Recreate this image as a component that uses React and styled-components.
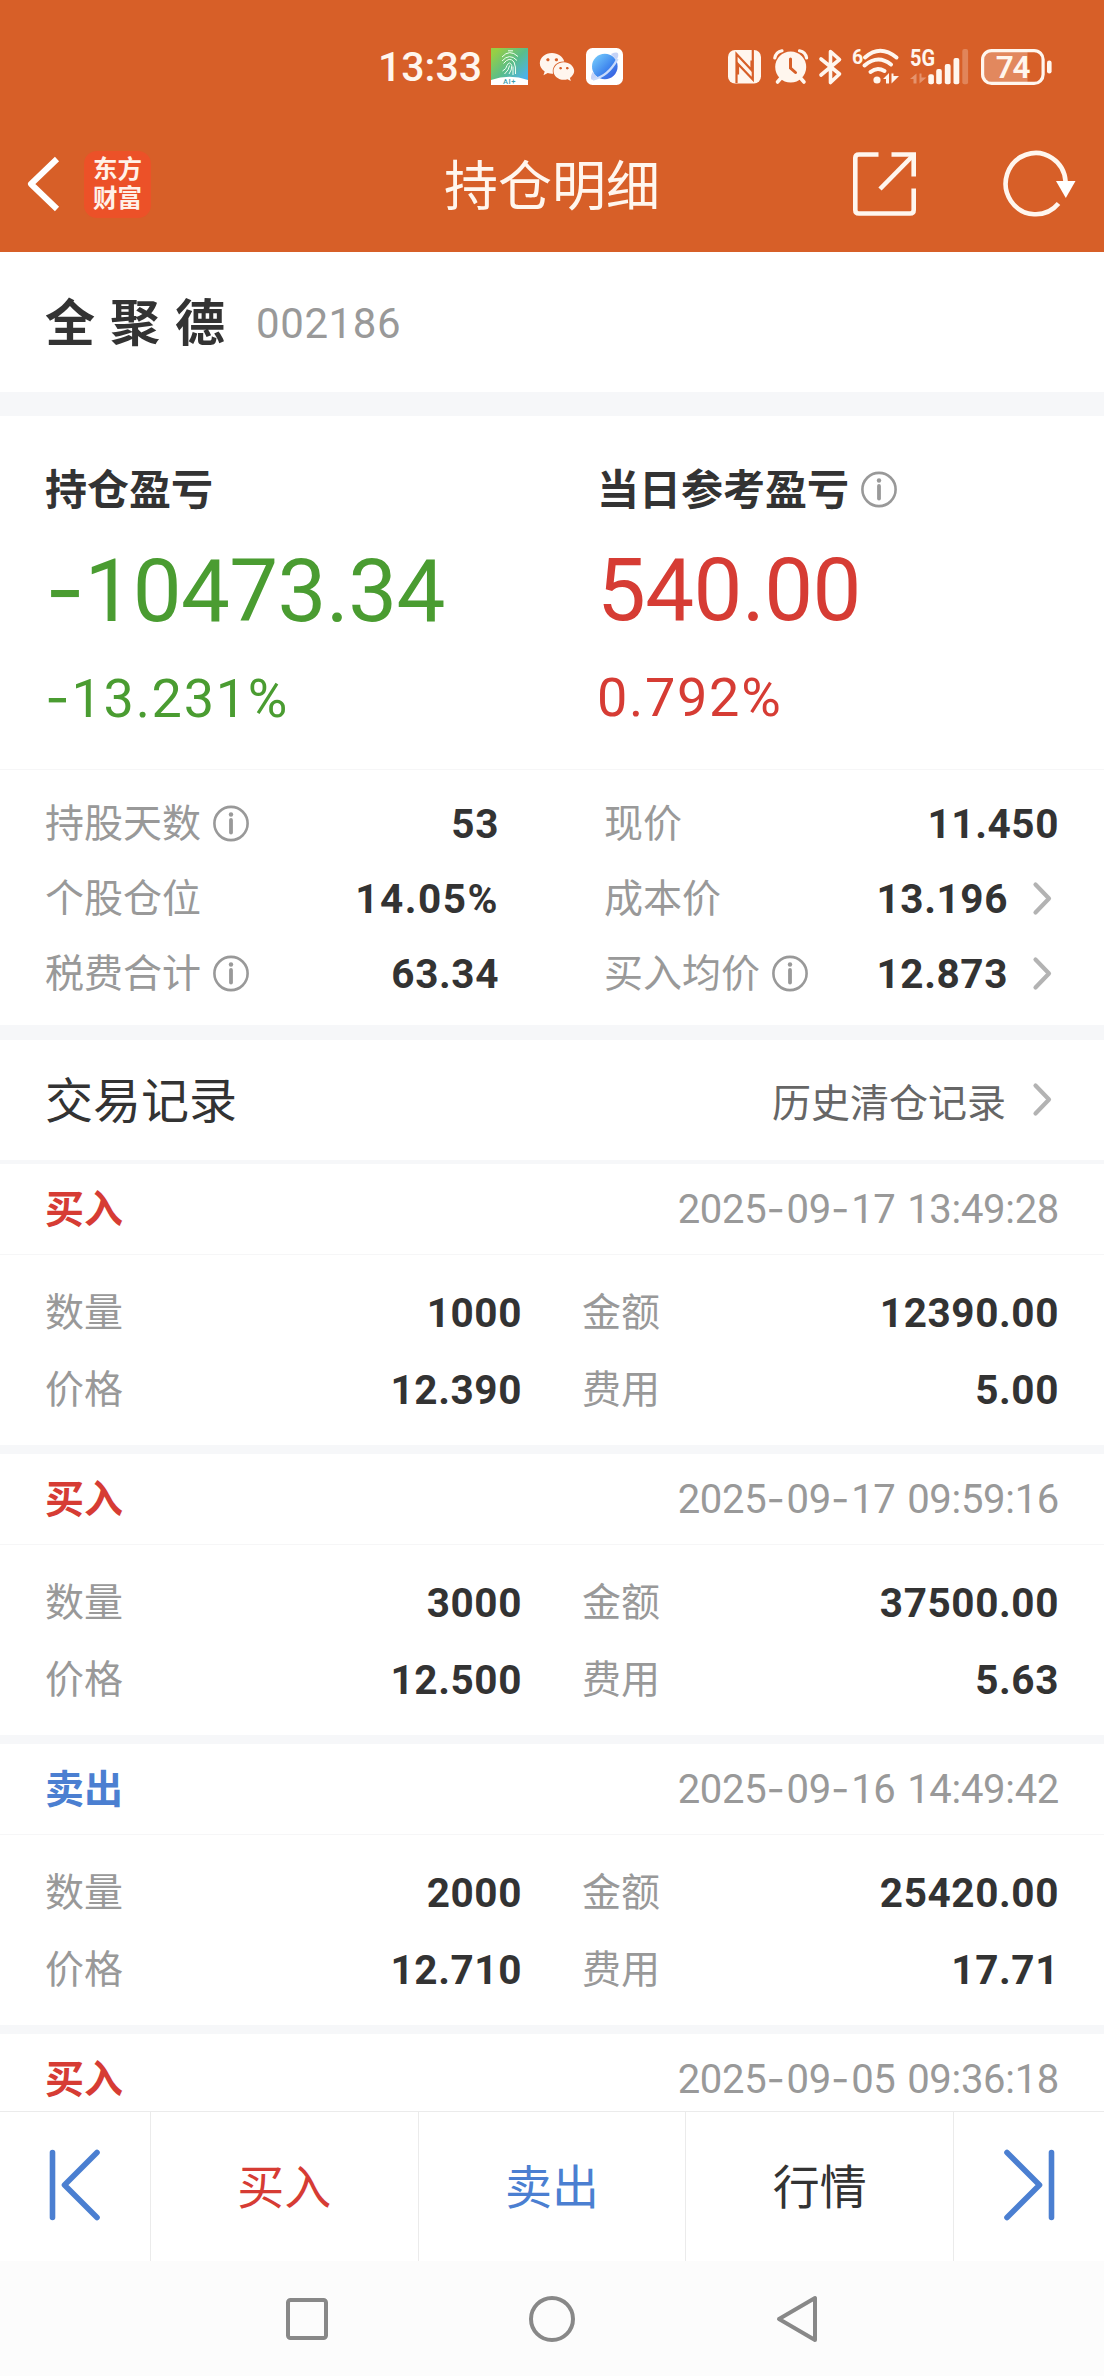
import { Fragment } from 'react'
import styled, { createGlobalStyle } from 'styled-components'
import { FaWeixin } from 'react-icons/fa'

const COLOR = {
  brand: '#d75f28',
  onBrand: '#fff6ee',
  text: '#333333',
  textMid: '#666666',
  textLight: '#999999',
  chevron: '#b3b3b3',
  up: '#d63c34',
  down: '#4a9c31',
  sell: '#4b7fd1',
  gap: '#f6f7f9',
  line: '#f6f6f7',
  barLine: '#ebebeb',
}

const GlobalStyle = createGlobalStyle`
  * {
    box-sizing: border-box;
  }

  body {
    margin: 0;
    background: #fff;
    font-family: 'Roboto', 'Noto Sans CJK SC', sans-serif;
    color: ${COLOR.text};
  }

  svg {
    display: block;
    flex: none;
    overflow: visible;
  }
`

const Screen = styled.div`
  display: flex;
  flex-direction: column;
  width: 1104px;
  height: 2376px;
  overflow: hidden;
`

const Header = styled.header`
  flex: none;
  height: 252px;
  background: ${COLOR.brand};
  color: ${COLOR.onBrand};
`

const StatusBar = styled.div`
  display: flex;
  align-items: center;
  justify-content: space-between;
  height: 116px;
  padding: 17px 52px 0 378px;
`

const StatusGroup = styled.div`
  display: flex;
  align-items: center;
  gap: ${({ $gap }) => $gap}px;
`

const Clock = styled.span`
  width: 102px;
  font-size: 41px;
  font-weight: 500;
  line-height: 48px;
  white-space: nowrap;
`

const TitleBar = styled.div`
  display: grid;
  grid-template-columns: 1fr auto 1fr;
  align-items: center;
  height: 136px;
  padding: 0 28px 0 27px;
`

const TitleBarSide = styled.div`
  display: flex;
  align-items: center;
  justify-content: ${({ $end }) => ($end ? 'flex-end' : 'flex-start')};
  gap: ${({ $end }) => ($end ? 88 : 24)}px;
`

const Title = styled.h1`
  margin: 0;
  padding: 7px 0 0 1px;
  font-size: 54px;
  font-weight: 400;
  line-height: 60px;
`

const AppLogo = styled.div`
  display: flex;
  flex-direction: column;
  align-items: center;
  justify-content: center;
  width: 67px;
  height: 67px;
  border-radius: 13px;
  background: #ec5128;
  font-size: 24.5px;
  font-weight: 600;
  line-height: 29px;
  color: #fff1e8;
`

const StockRow = styled.section`
  display: flex;
  flex: none;
  align-items: center;
  gap: 16px;
  height: 140px;
  padding: 3px 45px 0;
`

const StockName = styled.span`
  font-size: 50px;
  font-weight: 700;
  line-height: 60px;
  letter-spacing: 15px;
`

const StockCode = styled.span`
  font-size: 42px;
  line-height: 60px;
  letter-spacing: 0.6px;
  color: ${COLOR.textLight};
`

const Gap = styled.div`
  flex: none;
  height: ${({ $size }) => $size}px;
  background: ${COLOR.gap};
`

const Summary = styled.section`
  display: grid;
  flex: none;
  grid-template-columns: 1fr 1fr;
  height: 354px;
  border-bottom: 1px solid ${COLOR.line};
`

const SummaryColumn = styled.div`
  padding: 46px 0 0 45px;
  color: ${({ $color }) => $color};
`

const SummaryLabel = styled.div`
  display: flex;
  align-items: center;
  gap: 12px;
  height: 56px;
  font-size: 42px;
  font-weight: 700;
  line-height: 54px;
  color: ${COLOR.text};

  span {
    padding-top: 2px;
  }
`

const SummaryAmount = styled.div`
  height: 104px;
  margin-top: 20px;
  font-size: 87px;
  line-height: 104px;
  letter-spacing: -0.6px;
`

const SummaryPercent = styled.div`
  height: 64px;
  margin-top: 24px;
  font-size: 54px;
  line-height: 64px;
  letter-spacing: 1.7px;
`

const Dash = styled.span`
  font-family: 'Inter', sans-serif;
`

const DetailGrid = styled.section`
  display: grid;
  flex: none;
  grid-template-columns: 454px 455px;
  grid-auto-rows: 75px;
  column-gap: 105px;
  height: 255px;
  padding: 16px 45px 0;
`

const RecordGrid = styled(DetailGrid)`
  grid-template-columns: 477px 477px;
  grid-auto-rows: 77px;
  column-gap: 60px;
  height: 190px;
  padding-top: 19px;
`

const Field = styled.div`
  display: flex;
  align-items: center;
`

const FieldLabel = styled.span`
  display: flex;
  align-items: center;
  gap: 12px;
  margin-right: auto;
  font-size: 39px;
  line-height: 50px;
  color: ${COLOR.textLight};
`

const FieldValue = styled.span`
  font-size: 40.5px;
  font-weight: 700;
  line-height: 50px;
  letter-spacing: ${({ $wide }) => ($wide ? 1.5 : 0.6)}px;
`

const ChevronBox = styled.span`
  display: flex;
  justify-content: flex-end;
  width: 51px;
  padding-right: 7px;
`

const SectionHeader = styled.section`
  display: flex;
  flex: none;
  align-items: center;
  height: 120px;
  padding: 0 45px;
`

const SectionTitle = styled.h2`
  margin: 0 auto 0 0;
  padding-top: 3px;
  font-size: 48px;
  font-weight: 400;
  line-height: 60px;
`

const SectionLink = styled.span`
  padding: 8px 2px 0 0;
  font-size: 39px;
  line-height: 50px;
  color: ${COLOR.textMid};
`

const Records = styled.main`
  flex: 1;
  min-height: 0;
  overflow: hidden;
`

const RecordHeader = styled.div`
  display: flex;
  align-items: center;
  justify-content: space-between;
  height: 91px;
  padding: 0 45px;
  border-bottom: 1px solid ${COLOR.line};
`

const RecordSide = styled.span`
  padding-top: 2px;
  font-size: 39px;
  font-weight: 700;
  line-height: 50px;
  color: ${({ $sell }) => ($sell ? COLOR.sell : COLOR.up)};
`

const RecordTime = styled.time`
  font-size: 40px;
  line-height: 50px;
  letter-spacing: -0.3px;
  word-spacing: 2px;
  color: ${COLOR.textLight};

  ${Dash} {
    letter-spacing: 1.8px;
  }
`

const ActionBar = styled.nav`
  display: grid;
  flex: none;
  grid-template-columns: 151px 1fr 1fr 1fr 150px;
  height: 150px;
  border-top: 1px solid ${COLOR.barLine};
`

const Action = styled.button`
  display: flex;
  align-items: center;
  justify-content: center;
  padding: ${({ $icon }) => ($icon ? '0 0 3px' : '2px 0 0')};
  border: 0;
  border-right: 1px solid ${COLOR.barLine};
  background: none;
  font: inherit;
  font-size: 47px;
  line-height: 60px;
  color: ${({ $color }) => $color || COLOR.sell};

  &:last-child {
    border-right: 0;
  }
`

const SystemBar = styled.footer`
  display: grid;
  flex: none;
  grid-template-columns: repeat(3, 245px);
  align-items: center;
  justify-content: center;
  justify-items: center;
  height: 115px;
  background: #fcfcfc;
`

const InfoIcon = () => (
  <svg width="36" height="36" viewBox="0 0 36 36" fill="none" stroke="#999" strokeWidth="2.6">
    <circle cx="18" cy="17.5" r="16.6" />
    <path d="M18 14V26.5" strokeWidth="3.8" strokeLinecap="round" />
    <circle cx="18" cy="8.5" r="2.2" fill="#999" stroke="none" />
  </svg>
)

const Chevron = () => (
  <svg width="20" height="34" viewBox="0 0 20 34" fill="none" stroke={COLOR.chevron} strokeWidth="4.2" strokeLinecap="round" strokeLinejoin="round">
    <path d="M3.5 2.5L17 16.5L3.5 30.5" />
  </svg>
)

const BackIcon = () => (
  <svg width="33" height="56" viewBox="0 0 33 56" fill="none" stroke="#fff" strokeWidth="6" strokeLinejoin="round">
    <path d="M30 3L4 28L30 53" />
  </svg>
)

const ShareIcon = () => (
  <svg width="63" height="64" viewBox="0 0 63 64" fill="none" stroke={COLOR.onBrand} strokeWidth="4.6">
    <path d="M25.5 2.5H6Q2.3 2.5 2.3 6V58Q2.3 61.5 6 61.5H57Q60.7 61.5 60.7 58V36.5" />
    <path d="M38.5 2.5H60.7V24.5" />
    <path d="M27 37L60 3.5" />
  </svg>
)

const RefreshIcon = () => (
  <svg width="72" height="66" viewBox="0 0 72 66" fill="none" stroke={COLOR.onBrand} strokeWidth="4.6">
    <path d="M54.5 52.5A30 30.6 0 1 1 61.6 30.5" />
    <path d="M52 30H71.5L61.8 47Z" fill="#fff" stroke="none" />
  </svg>
)

const ScanAppIcon = () => (
  <svg width="37" height="37" viewBox="0 0 37 37">
    <defs>
      <linearGradient id="scanBg" x1="0" y1="0" x2="1" y2="1">
        <stop offset="0.1" stopColor="#97cf45" />
        <stop offset="0.5" stopColor="#59bd8b" />
        <stop offset="0.85" stopColor="#4db2ea" />
      </linearGradient>
    </defs>
    <rect width="37" height="37" fill="url(#scanBg)" />
    <g fill="none" stroke="#f0fff0" strokeWidth="1">
      <path d="M17 2.8H22" />
      <path d="M11 9Q18.5 0.5 27 8.5" />
      <path d="M11 13Q18.5 4.5 26 12.5" />
      <path d="M12.5 15.5Q18.5 8 23 14Q25 18 24.5 26" />
      <path d="M11.5 23Q15.5 21 16 17.5Q18.5 12.5 20.8 17.5Q21 22 18 26" />
      <path d="M13.5 26Q18 22 18.6 17.5" />
      <path d="M22 18.5V27" />
    </g>
    <path d="M0 32Q18.5 25.5 37 32V37H0Z" fill="#fff" />
    <text x="18.5" y="36" textAnchor="middle" fontSize="7.5" fontWeight="500" letterSpacing="0.6" fill="#3f9fae">AI+</text>
  </svg>
)

const BrowserAppIcon = () => (
  <svg width="37" height="37" viewBox="0 0 37 37">
    <defs>
      <linearGradient id="planet" x1="0.1" y1="0.1" x2="0.9" y2="0.9">
        <stop offset="0" stopColor="#72c7fb" />
        <stop offset="0.6" stopColor="#3f86ee" />
        <stop offset="1" stopColor="#3a5fe0" />
      </linearGradient>
    </defs>
    <rect width="37" height="37" rx="6.5" fill="#fff" />
    <path d="M25 6Q31 3.5 32 5.5Q33 8 30.5 12Z" fill="#c5d3f7" />
    <path d="M6.5 24Q4 30 5.5 31.5Q7 32.5 12 30.5Z" fill="#c5d3f7" />
    <circle cx="18.8" cy="18.5" r="12.8" fill="url(#planet)" />
    <path d="M7 31.5Q22 28.5 31.5 11" fill="none" stroke="#c9dbfb" strokeWidth="2.4" />
  </svg>
)

const NfcIcon = () => (
  <svg width="36" height="34" viewBox="0 0 36 34">
    <rect width="33" height="33.5" rx="7" fill={COLOR.onBrand} />
    <path d="M8.5 33V4L23.5 20V10.5" fill="none" stroke={COLOR.brand} strokeWidth="2.2" />
    <path d="M24.8 0V29.5L10 14V24.5" fill="none" stroke={COLOR.brand} strokeWidth="2.2" />
  </svg>
)

const AlarmIcon = () => (
  <svg width="36" height="35" viewBox="0 0 36 35" fill="none" stroke={COLOR.onBrand} strokeLinecap="round">
    <circle cx="17.7" cy="18" r="15.5" fill={COLOR.onBrand} stroke="none" />
    <path d="M1.8 9Q3 3 9 1.8M26.5 1.8Q32.5 3 33.6 9" strokeWidth="3.2" />
    <path d="M8 29L4.5 33M27.5 29L31 33" strokeWidth="3.6" />
    <path d="M17.5 10V19L22.5 23.5" stroke={COLOR.brand} strokeWidth="3" />
  </svg>
)

const BluetoothIcon = () => (
  <svg width="23" height="36" viewBox="0 0 23 36" fill="none" stroke={COLOR.onBrand} strokeWidth="3.6" strokeLinecap="round" strokeLinejoin="round">
    <path d="M2 10L20.5 25L11.5 33.5V2.5L20.5 10.5L2 26" />
  </svg>
)

const WifiIcon = () => (
  <svg width="48" height="37" viewBox="-1 0 48 37">
    <text x="0" y="15.5" fontSize="19.5" fontWeight="700" fill={COLOR.onBrand}>6</text>
    <g fill="none" stroke={COLOR.onBrand} strokeWidth="4" strokeLinecap="round">
      <path d="M13 9.5Q28 -4 44.5 9.5" />
      <path d="M12.5 17.5Q26 6 39 16.5" />
      <path d="M18.5 24Q25 18.5 32.5 23" />
    </g>
    <circle cx="25" cy="32" r="3.6" fill={COLOR.onBrand} />
    <path d="M31 31L37 25V35.5H34V31ZM39.5 25.5H41.5V28H47L39.5 35.5Z" fill={COLOR.onBrand} />
  </svg>
)

const SignalIcon = () => (
  <svg width="63" height="37" viewBox="-1 0 63 37" fill={COLOR.onBrand}>
    <text x="0" y="18.2" fontSize="23" fontWeight="700" textLength="25" lengthAdjust="spacingAndGlyphs">5G</text>
    <path d="M0 31L6.5 25.5V35.5H3.5V31ZM9.5 25.5H11.5V29.5H16.5L9.5 35.5Z" opacity="0.35" />
    <rect x="18.3" y="26.3" width="5.6" height="10" rx="2" />
    <rect x="26.2" y="21" width="5.6" height="15.3" rx="2" />
    <rect x="34.8" y="16" width="5.8" height="20.3" rx="2" />
    <rect x="43.5" y="10" width="5.8" height="26.3" rx="2" />
    <rect x="52.3" y="1" width="5.8" height="35.3" rx="2" opacity="0.25" />
  </svg>
)

const BatteryIcon = () => (
  <svg width="71" height="36" viewBox="0 0 71 36">
    <path d="M10 3H46.5V33H10Q3 33 3 26V10Q3 3 10 3Z" fill={COLOR.onBrand} opacity="0.28" />
    <rect x="1.6" y="1.6" width="60.5" height="32.8" rx="9" fill="none" stroke={COLOR.onBrand} strokeWidth="3.2" />
    <rect x="66" y="11.5" width="4.6" height="13" rx="2.3" fill={COLOR.onBrand} />
    <text x="31.5" y="29" textAnchor="middle" fontSize="31.5" fontWeight="600" letterSpacing="-1.2" fill={COLOR.onBrand}>74</text>
  </svg>
)

const EdgeIcon = ({ flipped }) => (
  <svg
    width="52"
    height="72"
    viewBox="0 0 52 72"
    fill="none"
    stroke={COLOR.sell}
    strokeWidth="5.6"
    strokeLinecap="round"
    strokeLinejoin="round"
    transform={flipped ? 'scale(-1 1)' : undefined}
  >
    <path d="M3.5 3.5V68.5M48 3.5L15.5 36L48 68.5" />
  </svg>
)

// Hyphens in the numeric face are too short, so they come from a wider one
const Digits = ({ children }) =>
  children.split('-').map((part, i) => (
    <Fragment key={i}>
      {i > 0 && <Dash>-</Dash>}
      {part}
    </Fragment>
  ))

const DETAILS = [
  { label: '持股天数', value: '53', info: true },
  { label: '现价', value: '11.450' },
  { label: '个股仓位', value: '14.05%' },
  { label: '成本价', value: '13.196', link: true },
  { label: '税费合计', value: '63.34', info: true },
  { label: '买入均价', value: '12.873', info: true, link: true },
]

const RECORDS = [
  { side: '买入', time: '2025-09-17 13:49:28', count: '1000', amount: '12390.00', price: '12.390', fee: '5.00' },
  { side: '买入', time: '2025-09-17 09:59:16', count: '3000', amount: '37500.00', price: '12.500', fee: '5.63' },
  { side: '卖出', time: '2025-09-16 14:49:42', count: '2000', amount: '25420.00', price: '12.710', fee: '17.71' },
  { side: '买入', time: '2025-09-05 09:36:18' },
]

const DetailField = ({ label, value, info, link }) => (
  <Field>
    <FieldLabel>
      {label}
      {info && <InfoIcon />}
    </FieldLabel>
    <FieldValue $wide={value.endsWith('%')}>{value}</FieldValue>
    {link && (
      <ChevronBox>
        <Chevron />
      </ChevronBox>
    )}
  </Field>
)

const TradeRecord = ({ record }) => (
  <article>
    <RecordHeader>
      <RecordSide $sell={record.side === '卖出'}>{record.side}</RecordSide>
      <RecordTime>
        <Digits>{record.time}</Digits>
      </RecordTime>
    </RecordHeader>
    {record.count && (
      <>
        <RecordGrid as="div">
          <DetailField label="数量" value={record.count} />
          <DetailField label="金额" value={record.amount} />
          <DetailField label="价格" value={record.price} />
          <DetailField label="费用" value={record.fee} />
        </RecordGrid>
        <Gap $size={9} />
      </>
    )}
  </article>
)

const App = () => (
  <Screen>
    <GlobalStyle />
    <Header>
      <StatusBar>
        <StatusGroup $gap={11}>
          <Clock>13:33</Clock>
          <ScanAppIcon />
          <FaWeixin size={36} />
          <BrowserAppIcon />
        </StatusGroup>
        <StatusGroup $gap={9.5}>
          <NfcIcon />
          <AlarmIcon />
          <BluetoothIcon />
          <WifiIcon />
          <SignalIcon />
          <BatteryIcon />
        </StatusGroup>
      </StatusBar>
      <TitleBar>
        <TitleBarSide>
          <BackIcon />
          <AppLogo>
            <span>东方</span>
            <span>财富</span>
          </AppLogo>
        </TitleBarSide>
        <Title>持仓明细</Title>
        <TitleBarSide $end>
          <ShareIcon />
          <RefreshIcon />
        </TitleBarSide>
      </TitleBar>
    </Header>

    <StockRow>
      <StockName>全聚德</StockName>
      <StockCode>002186</StockCode>
    </StockRow>
    <Gap $size={24} />

    <Summary>
      <SummaryColumn $color={COLOR.down}>
        <SummaryLabel>
          <span>持仓盈亏</span>
        </SummaryLabel>
        <SummaryAmount>
          <Digits>-10473.34</Digits>
        </SummaryAmount>
        <SummaryPercent>
          <Digits>-13.231%</Digits>
        </SummaryPercent>
      </SummaryColumn>
      <SummaryColumn $color={COLOR.up}>
        <SummaryLabel>
          <span>当日参考盈亏</span>
          <InfoIcon />
        </SummaryLabel>
        <SummaryAmount>540.00</SummaryAmount>
        <SummaryPercent>0.792%</SummaryPercent>
      </SummaryColumn>
    </Summary>

    <DetailGrid>
      {DETAILS.map((detail) => (
        <DetailField key={detail.label} {...detail} />
      ))}
    </DetailGrid>
    <Gap $size={15} />

    <SectionHeader>
      <SectionTitle>交易记录</SectionTitle>
      <SectionLink>历史清仓记录</SectionLink>
      <ChevronBox>
        <Chevron />
      </ChevronBox>
    </SectionHeader>
    <Gap $size={4} />

    <Records>
      {RECORDS.map((record) => (
        <TradeRecord key={record.time} record={record} />
      ))}
    </Records>

    <ActionBar>
      <Action $icon>
        <EdgeIcon />
      </Action>
      <Action $color={COLOR.up}>买入</Action>
      <Action $color={COLOR.sell}>卖出</Action>
      <Action $color={COLOR.text}>行情</Action>
      <Action $icon>
        <EdgeIcon flipped />
      </Action>
    </ActionBar>

    <SystemBar>
      <svg width="42" height="42" viewBox="0 0 42 42" fill="none" stroke="#888" strokeWidth="4">
        <rect x="2" y="2" width="38" height="38" rx="2.5" />
      </svg>
      <svg width="46" height="46" viewBox="0 0 46 46" fill="none" stroke="#888" strokeWidth="4">
        <circle cx="23" cy="23" r="21" />
      </svg>
      <svg width="42" height="48" viewBox="0 0 42 48" fill="none" stroke="#888" strokeWidth="4" strokeLinejoin="round">
        <path d="M39 3V45L3 24Z" />
      </svg>
    </SystemBar>
  </Screen>
)

export default App
